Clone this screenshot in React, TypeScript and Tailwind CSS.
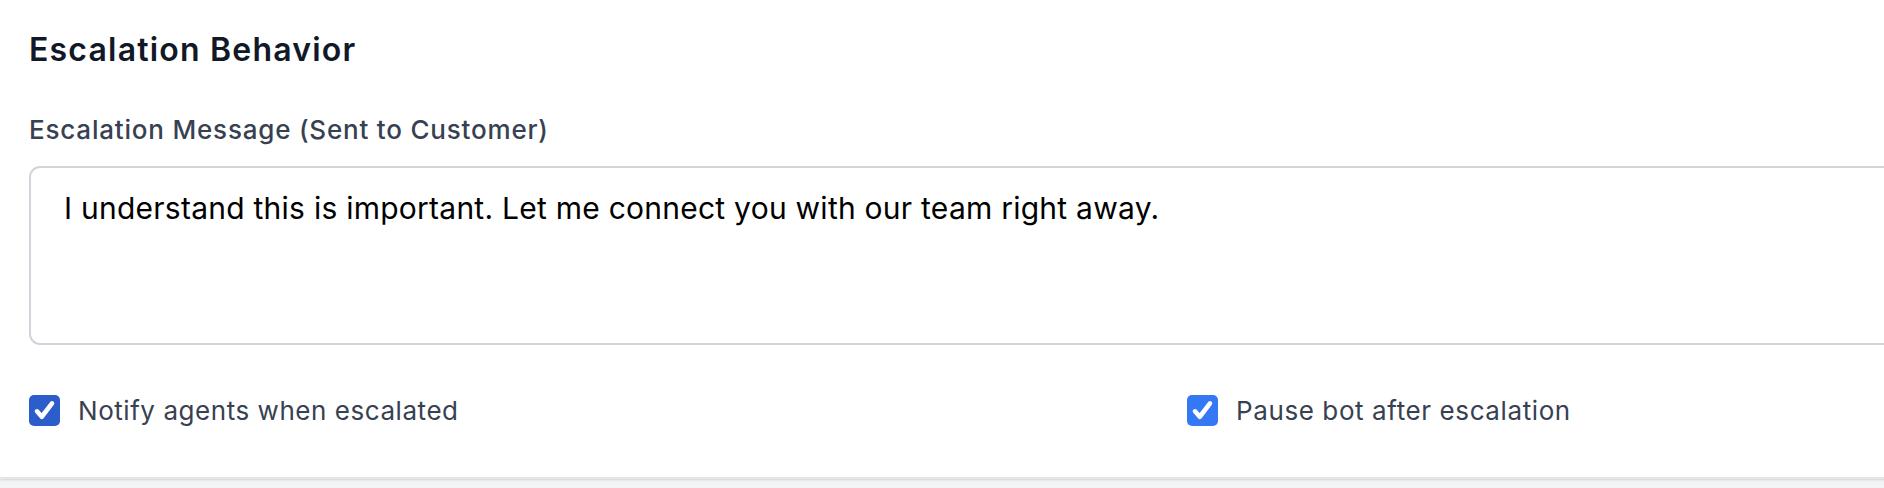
import React from "react";

function Check({ tone }: { tone: "dark" | "light" }) {
  return (
    <span
      className={
        "flex h-[31px] w-[31px] shrink-0 items-center justify-center rounded-[5px] " +
        (tone === "dark" ? "bg-[#2c5ecb]" : "bg-[#3478f6]")
      }
    >
      <svg viewBox="0 0 24 24" className="h-[25px] w-[25px]" fill="none">
        <path d="M4.8 12.8l4.6 5.2L19.2 5.2" stroke="white" strokeWidth="4.4" strokeLinecap="round" strokeLinejoin="round" />
      </svg>
    </span>
  );
}

export default function App() {
  return (
    <div className="h-[488px] w-full overflow-hidden bg-[#f3f4f6] font-['Inter',sans-serif]">
      <div className="w-[2345px] border-b-2 border-[#e4e5e9] bg-white px-[29px] pt-[28px] pb-[49px] shadow-sm">
        <h2 className="text-[32px] leading-[44px] font-semibold tracking-[1.2px] text-[#111827]">Escalation Behavior</h2>

        <label className="mt-[40px] block text-[26px] leading-[36px] font-medium tracking-[0.8px] text-[#374151]">
          Escalation Message (Sent to Customer)
        </label>
        <textarea
          className="mt-[18px] block h-[179px] w-full resize-none rounded-[11px] border-2 border-[#d1d5db] px-[33px] pt-[18px] text-[30px] leading-[44px] tracking-[0.25px] text-black outline-none"
          defaultValue="I understand this is important. Let me connect you with our team right away."
        />

        <div className="mt-[47px] grid grid-cols-2 gap-[29px]">
          <div className="flex h-[36px] items-center gap-[18px]">
            <Check tone="dark" />
            <span className="text-[26px] tracking-[0.55px] text-[#374151]">Notify agents when escalated</span>
          </div>
          <div className="flex h-[36px] items-center gap-[18px]">
            <Check tone="light" />
            <span className="text-[26px] tracking-[0.6px] text-[#374151]">Pause bot after escalation</span>
          </div>
        </div>
      </div>
    </div>
  );
}
